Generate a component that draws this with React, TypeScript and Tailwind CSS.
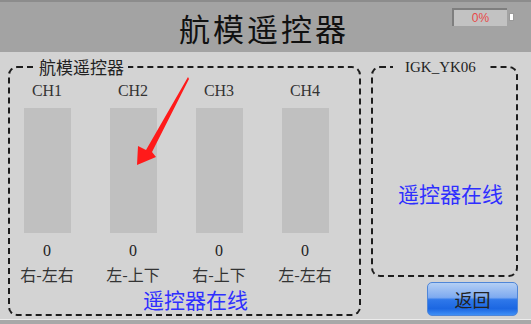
const cjk = "font-['Noto_Sans_CJK_SC','Noto_Sans',sans-serif]";
const serif = "font-['Liberation_Serif','Noto_Sans_CJK_SC',serif]";

const channels = [
  { name: "CH1", value: 0, label: "右-左右" },
  { name: "CH2", value: 0, label: "左-上下" },
  { name: "CH3", value: 0, label: "右-上下" },
  { name: "CH4", value: 0, label: "左-左右" },
];

function Channel({ name, value, label }: { name: string; value: number; label: string }) {
  return (
    <div className="w-[60px] flex flex-col items-center">
      <div className={`${serif} text-[16px] leading-[18px] text-[#333]`}>{name}</div>
      <div className="mt-[8px] w-[47px] h-[125px] bg-[#c0c0c0]" />
      <div className={`${serif} mt-[9px] text-[16px] leading-[18px] text-[#222]`}>{value}</div>
      <div className={`${cjk} mt-[6px] whitespace-nowrap text-[16px] leading-[16px] text-[#333]`}>{label}</div>
    </div>
  );
}

export default function App() {
  return (
    <div className={`${cjk} relative w-[531px] h-[324px] overflow-hidden bg-[#d3d3d3] flex flex-col`}>
      {/* header */}
      <div className="h-[52px] shrink-0 bg-[#a3a3a3] border-t-2 border-[#8c8c8c] grid grid-cols-[1fr_auto_1fr] items-center">
        <div />
        <div className="text-[31px] leading-none tracking-[3px] text-[#111] pl-[3px] -ml-[6px]">航模遥控器</div>
        <div className="flex justify-end items-start self-start pt-[6px] pr-[17px] gap-[2px]">
          <div className="w-[55px] h-[18px] bg-[#c2c2c2] border-l-2 border-t-2 border-[#7e7e7e] flex items-center justify-center text-[12px] leading-none text-[#e84848] font-['Liberation_Sans',sans-serif]">
            0%
          </div>
          <div className="mt-[5px] w-[5px] h-[8px] bg-white border border-[#9a9a9a]" />
        </div>
      </div>

      {/* body */}
      <div className="flex-1 flex gap-[10px] pl-[8px] pt-[5px]">
        <fieldset className="w-[353px] h-[259px] border-2 border-dashed border-[#1c1c1c] rounded-[9px] px-0 pb-0 flex flex-col">
          <legend className="ml-[25px] px-[4px] text-[17px] leading-[20px] text-[#222]">航模遥控器</legend>
          <div className="flex gap-[26px] pl-[7px] pt-[5px]">
            {channels.map((c) => (
              <Channel key={c.name} {...c} />
            ))}
          </div>
          <div className="pl-[133px] mt-[6px] text-[21px] leading-[22px] text-[#2f2fff]">遥控器在线</div>
        </fieldset>

        <div className="w-[147px] flex flex-col">
          <fieldset className="h-[220px] border-2 border-dashed border-[#1c1c1c] rounded-[9px] px-0 pb-0 flex flex-col">
            <legend className={`${serif} ml-[20px] px-[12px] text-[15px] leading-[20px] text-[#222]`}>IGK_YK06</legend>
            <div className="mt-[104px] pl-[25px] text-[21px] leading-[24px] text-[#2f2fff]">遥控器在线</div>
          </fieldset>
          <button className="self-end mt-[5px] w-[91px] h-[34px] rounded-[5px] border border-[#4f86d8] bg-[linear-gradient(to_bottom,#b4cff4_0%,#7eaaf0_45%,#2f78ea_52%,#1c67e2_80%,#3f8ff6_100%)] text-[18px] leading-none text-[#222] flex items-center justify-center">
            返回
          </button>
        </div>
      </div>

      {/* footer strip */}
      <div className="h-[5px] shrink-0 bg-[#a8a8a8] border-t border-[#ececec]" />

      {/* red annotation arrow */}
      <svg className="absolute left-0 top-0 pointer-events-none" width="531" height="324" viewBox="0 0 531 324">
        <polygon
          points="188,77 189,79 152,152 156,157 137,165 138,146 146,150"
          fill="#ff1a1a"
        />
      </svg>
    </div>
  );
}
